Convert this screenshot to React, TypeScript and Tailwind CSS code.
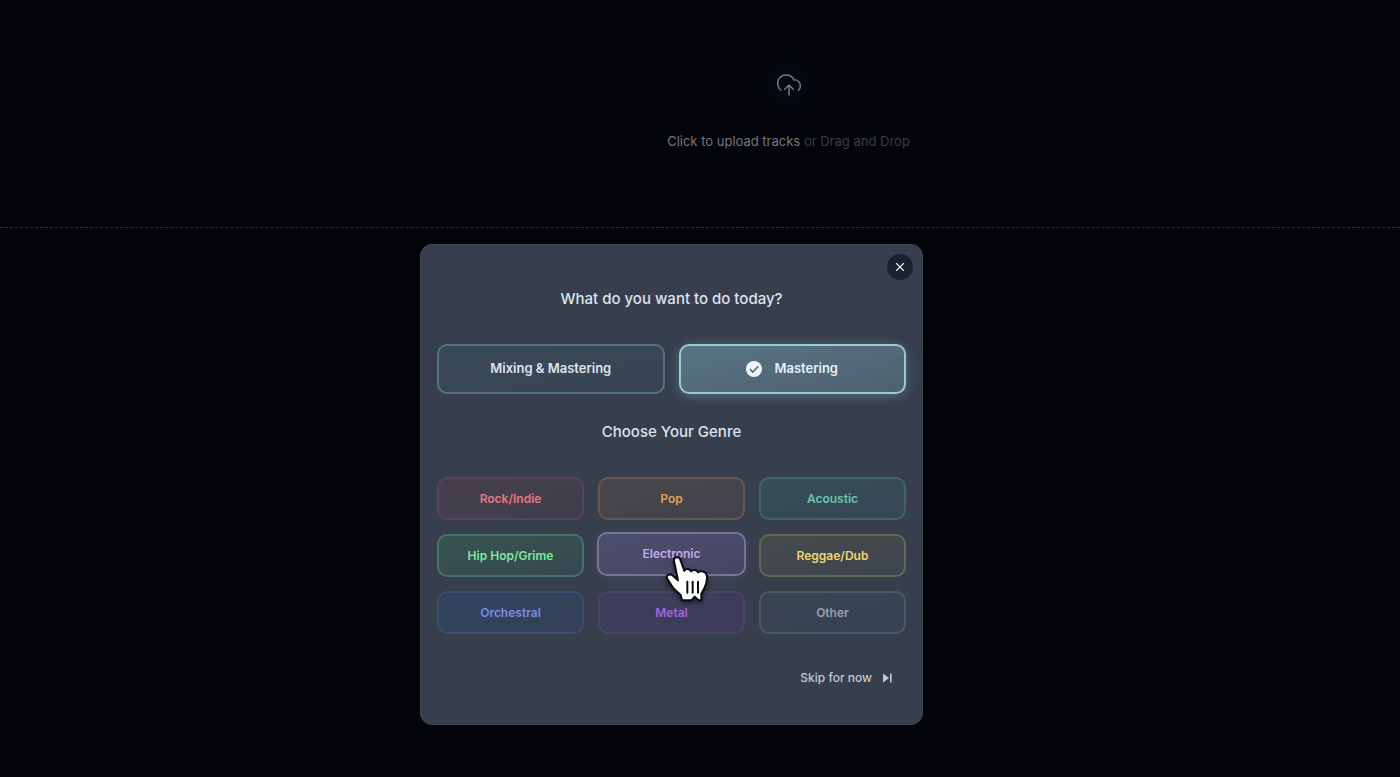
import React from 'react'
import clsx from 'clsx'
import { X } from 'lucide-react'

interface Genre {
  name: string
  style: string
}

const genres: Genre[] = [
  { name: 'Rock/Indie', style: 'text-[#e67780] border-[#5a4552] from-[#453f4d] to-[#403e4c]' },
  { name: 'Pop', style: 'text-[#e5a055] border-[#675750] from-[#48474b] to-[#41424b]' },
  { name: 'Acoustic', style: 'text-[#6bc5ab] border-[#416468] from-[#355056] to-[#374553]' },
  { name: 'Hip Hop/Grime', style: 'text-[#7aeba0] border-[#457466] from-[#36544f] to-[#374850]' },
  { name: 'Electronic', style: 'text-[#c6a9ee] border-[#77749a] from-[#4c4f6c] to-[#454663]' },
  { name: 'Reggae/Dub', style: 'text-[#ecd775] border-[#656755] from-[#474b4c] to-[#3d444c]' },
  { name: 'Orchestral', style: 'text-[#7a8be3] border-[#3b4d70] from-[#30435f] to-[#354156]' },
  { name: 'Metal', style: 'text-[#a564e3] border-[#4b4268] from-[#3b3f5b] to-[#3e3b57]' },
  { name: 'Other', style: 'text-[#9a9eae] border-[#4b5866] from-[#3b4350] to-[#364353]' },
]

function CloudUploadIcon() {
  return (
    <svg viewBox="0 0 72 66" className="h-[22px] w-6" fill="none" stroke="currentColor" strokeWidth="4.5" strokeLinecap="round" strokeLinejoin="round" aria-hidden="true">
      <path d="M11 48C5 43 2 36 2 28C2 13 13 3 28 3C39 3 46 8 50 17C62 17 70 25 70 36C70 42 68 46 64 49" />
      <path d="M36 63V34M23 46L36 33L49 46" />
    </svg>
  )
}

function CheckBadge() {
  return (
    <svg viewBox="0 0 16 16" className="size-4" aria-hidden="true">
      <circle cx="8" cy="8" r="8" fill="#edf5fa" />
      <path d="M3.9 8.2L6.8 11L12.3 5.2" fill="none" stroke="#536a78" strokeWidth="1.6" />
    </svg>
  )
}

function HandPointer() {
  return (
    <svg
      viewBox="0 0 135 150"
      className="pointer-events-none absolute top-[19px] left-[65px] z-10 h-[50px] w-[45px] drop-shadow-[0_2px_2px_rgba(0,0,0,0.5)]"
      aria-hidden="true"
    >
      <path
        d="M30 24C28 11 45 8 49 20L61 54C64 46 76 46 81 55C87 48 98 50 102 58C111 51 125 56 128 66C131 78 128 91 121 106L112 122L112 141L104 142L92 131L82 142L54 142L50 126L28 106L9 76C5 66 18 60 27 68L42 82Z"
        fill="#fff"
        stroke="#0b0b12"
        strokeWidth="6"
        strokeLinejoin="round"
      />
      <path d="M70 86V119M86 86V119M102 86V119" stroke="#0b0b12" strokeWidth="6" strokeLinecap="round" />
    </svg>
  )
}

function UploadArea() {
  return (
    <section className="border-b border-dashed border-[#2d2e33] pt-[53px] pb-[74px] pl-[177px]">
      <button type="button" className="mx-auto flex flex-col items-center gap-3">
        <span className="flex size-16 items-center justify-center rounded-full bg-radial from-[#050b12] to-[#020409] to-70% text-[#77777b]">
          <CloudUploadIcon />
        </span>
        <span className="text-[13px] leading-6 text-[#3c3d42]">
          <span className="text-[#77777b]">Click to upload tracks</span> or Drag and Drop
        </span>
      </button>
    </section>
  )
}

function ServiceButton({ selected, children }: { selected?: boolean; children: React.ReactNode }) {
  return (
    <button
      type="button"
      aria-pressed={!!selected}
      className={clsx(
        'flex h-[50px] items-center justify-center gap-3 rounded-[10px] border-2 bg-linear-to-br text-[13px] font-semibold',
        selected
          ? 'border-[#9bc8d2] from-[#587584] to-[#4e6070] text-[#e8f0f6] shadow-[0_2px_12px_rgba(110,165,180,0.5)]'
          : 'border-[#567480] from-[#3a4956] to-[#374553] text-[#dde4f0]'
      )}
    >
      {selected && <CheckBadge />}
      {children}
    </button>
  )
}

function GenreButton({ genre, active }: { genre: Genre; active: boolean }) {
  return (
    <button
      type="button"
      className={clsx(
        'relative flex items-center justify-center rounded-[10px] border-2 bg-linear-to-br text-xs font-semibold',
        genre.style,
        active ? '-mx-px -mt-0.5 mb-px h-11 shadow-[0_2px_10px_rgba(120,110,170,0.25)]' : 'h-[43px]'
      )}
    >
      {genre.name}
      {active && <HandPointer />}
    </button>
  )
}

function StartDialog() {
  return (
    <div
      role="dialog"
      aria-label="What do you want to do today?"
      className="relative w-full max-w-[503px] rounded-xl border border-[#3f4857] bg-[#373e4c] px-4 pt-[42px] pb-[34px]"
    >
      <button
        type="button"
        aria-label="Close"
        className="absolute top-[9px] right-[9px] flex size-[26px] items-center justify-center rounded-full bg-[#1b222f] text-[#e6eaf2]"
      >
        <X className="size-[14px]" />
      </button>

      <h2 className="text-center text-[15px] leading-6 font-medium text-[#dde2f0]">What do you want to do today?</h2>
      <div className="mt-[33px] grid grid-cols-2 gap-[14px]">
        <ServiceButton>Mixing &amp; Mastering</ServiceButton>
        <ServiceButton selected>Mastering</ServiceButton>
      </div>

      <h2 className="mt-[26px] text-center text-[15px] leading-6 font-medium text-[#dde2f0]">Choose Your Genre</h2>
      <div className="mt-[33px] grid grid-cols-3 gap-[14px]">
        {genres.map((genre) => (
          <GenreButton key={genre.name} genre={genre} active={genre.name === 'Electronic'} />
        ))}
      </div>

      <div className="mt-8 flex justify-end pr-[14px]">
        <button type="button" className="flex items-center gap-[10px] text-xs leading-6 font-medium text-[#c3cad7]">
          Skip for now
          <svg viewBox="0 0 10 10" className="size-[10px]" fill="currentColor" aria-hidden="true">
            <path d="M1 0.5L7 5L1 9.5ZM8 0.5H9.6V9.5H8Z" />
          </svg>
        </button>
      </div>
    </div>
  )
}

export default function App() {
  return (
    <div className="min-h-screen bg-[#020409] font-['Inter',sans-serif]">
      <UploadArea />
      <main className="flex justify-center pt-4 pr-[57px] pb-12">
        <StartDialog />
      </main>
    </div>
  )
}
